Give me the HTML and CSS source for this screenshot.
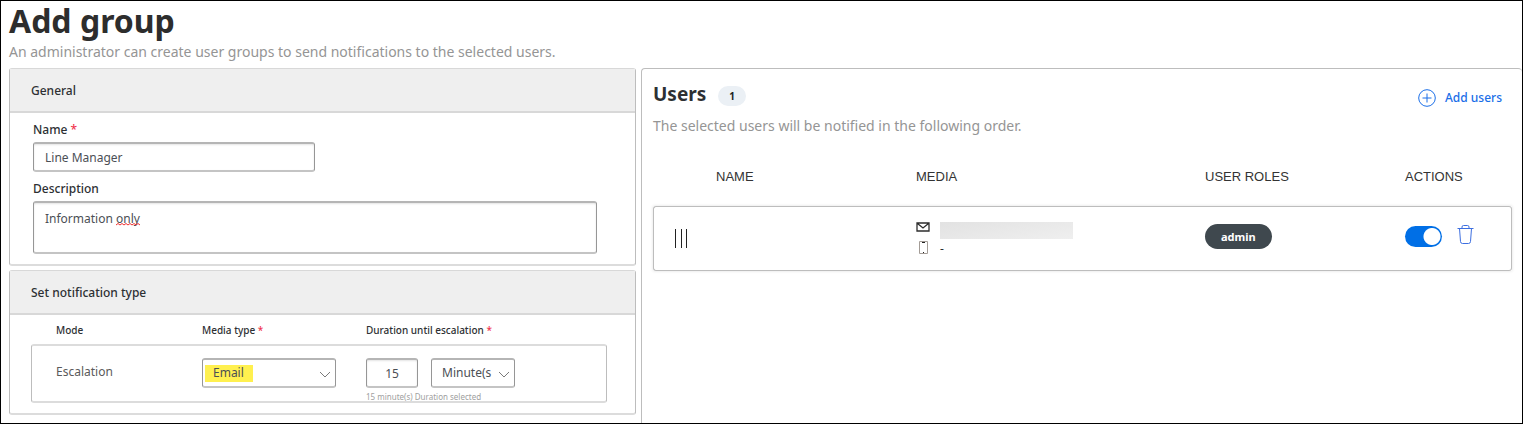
FILE: index.html
```html
<!DOCTYPE html>
<html lang="en">
<head>
<meta charset="utf-8">
<title>Add group</title>
<link rel="stylesheet" href="styles.css">
</head>
<body>
<div class="page">
  <header class="page-header">
    <h1 class="page-title">Add group</h1>
    <p class="lead">An administrator can create user groups to send notifications to the selected users.</p>
  </header>
  <main class="columns">
    <div class="settings">
      <section class="card">
        <h2 class="card-title">General</h2>
        <div class="general">
          <label class="label" for="name">Name <span class="required">*</span></label>
          <input class="control name-input" id="name" type="text" value="Line Manager">
          <label class="label" for="description">Description</label>
          <div class="description">
            <textarea class="control description-input" id="description" spellcheck="false">Information only</textarea>
            <svg class="squiggle" width="24" height="3" viewBox="0 0 24 3" fill="none" stroke="#f03030"><path d="M0 2l2-1.500 2 1.500 2-1.500 2 1.500 2-1.500 2 1.500 2-1.500 2 1.500 2-1.500 2 1.500 2-1.500 2 1.500"/></svg>
          </div>
        </div>
      </section>
      <section class="card">
        <h2 class="card-title">Set notification type</h2>
        <div class="notification">
          <div class="mode-grid mode-head">
            <span>Mode</span>
            <label for="media">Media type <span class="required">*</span></label>
            <label for="duration">Duration until escalation <span class="required">*</span></label>
          </div>
          <div class="mode-grid mode-row">
            <span class="mode-name">Escalation</span>
            <div class="select media-select">
              <select class="control marked" id="media"><option>Email</option></select>
              <svg class="chevron" width="12" height="7" viewBox="0 0 12 7" fill="none" stroke="#7a7a7a"><path d="M1 1l5 5 5-5"/></svg>
            </div>
            <div class="duration">
              <div class="duration-fields">
                <input class="control amount" id="duration" type="text" value="15">
                <div class="select unit-select">
                  <select class="control" aria-label="Duration unit"><option>Minute(s</option></select>
                  <svg class="chevron" width="12" height="7" viewBox="0 0 12 7" fill="none" stroke="#7a7a7a"><path d="M1 1l5 5 5-5"/></svg>
                </div>
              </div>
              <span class="hint">15 minute(s) Duration selected</span>
            </div>
          </div>
        </div>
      </section>
    </div>
    <section class="users">
      <div class="users-head">
        <h2 class="users-title">Users <span class="count">1</span></h2>
        <button class="add" type="button">
          <svg width="18" height="18" viewBox="0 0 18 18" fill="none" stroke="#1a6ee8"><circle cx="9" cy="9" r="8.300"/><path d="M9 4.500v9M4.500 9h9"/></svg>
          Add users
        </button>
      </div>
      <p class="lead">The selected users will be notified in the following order.</p>
      <table class="table">
        <thead>
          <tr><th class="col-drag"></th><th class="col-name">NAME</th><th class="col-media">MEDIA</th><th class="col-roles">USER ROLES</th><th>ACTIONS</th></tr>
        </thead>
        <tbody>
          <tr>
            <td><svg class="drag" width="14" height="19" viewBox="0 0 14 19" stroke="#222"><path d="M1.500 0v19M7.500 0v19M12.500 0v19"/></svg></td>
            <td></td>
            <td>
              <div class="media">
                <svg class="mail" width="14" height="10" viewBox="0 0 14 10" fill="none" stroke="#2d2d2d" stroke-width="1.300"><path d="M1 1h12v8H1zM1.500 1.500L7 6l5.500-4.500"/></svg>
                <span class="redacted"></span>
                <svg width="14" height="14" viewBox="0 0 14 14" fill="none" stroke="#a39c96"><path d="M3.500.5h8v12h-8z"/><path d="M6 1.500h3M7 11.500h1" stroke="#222"/></svg>
                <span>-</span>
              </div>
            </td>
            <td class="raised"><span class="role">admin</span></td>
            <td class="raised">
              <div class="actions">
                <input class="toggle" type="checkbox" role="switch" aria-label="Notify user" checked>
                <button class="delete" type="button" aria-label="Remove user">
                  <svg width="17" height="19" viewBox="0 0 17 19" fill="none" stroke="#3d6fe0"><path d="M.5 3.500h16M5 3.500V2Q5 .5 6.500.5h4Q12 .5 12 2v1.500M2.500 3.500l1 13q.1 2 2 2h6q1.900 0 2-2l1-13"/></svg>
                </button>
              </div>
            </td>
          </tr>
        </tbody>
      </table>
    </section>
  </main>
</div>
</body>
</html>
```
FILE: styles.css
```css
* { box-sizing: border-box; }
body {
  margin: 0;
  background: #fff;
  color: #2d3033;
  font: 12px/18px "Noto Sans", "Open Sans", sans-serif;
}
h1, h2, p { margin: 0; }
.page {
  display: flex;
  flex-direction: column;
  min-height: 100vh;
  padding-left: 8px;
  border: 1px solid #000;
}
.page-header { padding-bottom: 6px; }
.page-title { font-size: 32px; line-height: 40px; color: #2d2d2d; }
.lead { font-size: 14px; line-height: 21px; color: #959595; }
.columns {
  flex: 1;
  display: grid;
  grid-template-columns: 627fr 881fr;
  gap: 5px;
}
.settings { display: flex; flex-direction: column; gap: 4px; }
.card { border: 1px solid #bdbdbd; border-top-color: #d8d8d8; border-bottom: 2px solid #dcdcdc; border-radius: 3px; }
.card-title {
  padding: 13px 21px 11px;
  border-bottom: 2px solid #d8d8d8;
  background: #efefef;
  font-size: 12px;
  line-height: 18px;
  font-weight: 500;
}
.general {
  display: flex;
  flex-direction: column;
  padding: 8px 38px 10px 23px;
}
.label { font-weight: 500; line-height: 18px; }
.required { color: #f0364f; }
.control {
  width: 100%;
  margin: 0;
  border: 1px solid #969696;
  border-top: 2px solid #b5b5b5;
  border-bottom: 2px solid #c4c4c4;
  border-radius: 3px;
  background: #fff;
  color: #4b4f55;
  font: inherit;
  appearance: none;
  outline: none;
}
.name-input { width: 50%; height: 30px; margin: 3px 0 8px; padding: 0 11px; box-shadow: inset 0 1px 2px #e4e4e4; }
.description { position: relative; margin-top: 3px; }
.description-input { display: block; height: 53px; padding: 7px 11px; resize: none; box-shadow: inset 0 1px 2px #e4e4e4; }
.squiggle { position: absolute; left: 83px; top: 22px; }
.notification { padding: 6px 28px 10px 21px; }
.mode-grid { display: grid; grid-template-columns: 146px 164px 1fr; }
.mode-head { padding-left: 25px; font-size: 10px; font-weight: 500; }
.mode-row {
  height: 59px;
  margin-top: 5px;
  padding: 12px 0 0 24px;
  border: 1px solid #bdbdbd;
  border-top: 2px solid #dcdcdc;
  border-bottom: 2px solid #dcdcdc;
  border-radius: 3px;
}
.mode-name { padding-top: 5px; color: #5a5a5a; }
.select { position: relative; height: 30px; }
.select .control { height: 30px; padding: 0 10px; }
.media-select { width: 134px; }
.unit-select { width: 84px; }
.marked { background: linear-gradient(#fff04f, #fff04f) 2px 5px / 48px 17px no-repeat #fff; }
.chevron { position: absolute; right: 5px; top: 13px; pointer-events: none; }
.duration-fields { display: flex; gap: 13px; }
.amount { width: 52px; height: 30px; text-align: center; box-shadow: inset 0 1px 2px #e4e4e4; }
.hint { display: block; margin-top: 3px; font-size: 8px; line-height: 12px; color: #a0a0a0; }
.users {
  padding: 11px 10px 12px 11px;
  border: 1px solid #bdbdbd;
  border-width: 1px 0 0 1px;
  border-radius: 4px 4px 0 0;
}
.users-head { display: flex; justify-content: space-between; align-items: center; height: 35px; padding: 0 10px 7px 0; }
.users-title { display: flex; align-items: center; gap: 12px; font-size: 19px; line-height: 26px; }
.count { margin-top: 4px; padding: 0 11px; border-radius: 10px; background: #ebf0f5; font-size: 10px; line-height: 20px; color: #222; }
.add {
  display: flex;
  align-items: center;
  gap: 9px;
  margin-top: 7px;
  padding: 0;
  border: 0;
  background: none;
  color: #1a6ee8;
  font: inherit;
  font-weight: 500;
}
.table { width: 100%; margin-top: 31px; border-spacing: 0; table-layout: fixed; }
.table th { height: 39px; padding: 0 0 19px; text-align: left; font: 13px/20px "Liberation Sans", Arial, sans-serif; color: #333; }
.col-drag { width: 63px; }
.col-name { width: 200px; }
.col-media { width: 289px; }
.col-roles { width: 200px; }
.table td { height: 65px; padding: 0; border: 1px solid #bdbdbd; border-width: 1px 0; }
.table td:first-child { padding-left: 20px; border-left-width: 1px; border-radius: 3px 0 0 3px; }
.table td:last-child { border-right-width: 1px; border-radius: 0 3px 3px 0; }
.table .raised { padding-bottom: 4px; }
.table svg { display: block; }
.table tbody { box-shadow: 0 0 3px #e0e0e0; }
.media { display: grid; grid-template-columns: 14px 133px; gap: 2px 10px; align-items: center; line-height: 15px; }
.mail { align-self: start; }
.redacted { height: 17px; background: linear-gradient(170deg, #e2e2e2, #efefef); }
.role { display: inline-block; padding: 0 16px; border-radius: 13px; background: #3f484e; color: #fff; font-size: 11px; font-weight: 700; line-height: 25px; }
.actions { display: flex; align-items: center; gap: 15px; }
.toggle {
  width: 37px;
  height: 21px;
  margin: 0;
  border-radius: 11px;
  background: radial-gradient(circle at 27px 50%, #fff 8px, #006fe6 9px);
  appearance: none;
}
.delete { padding: 0 0 4px; border: 0; background: none; }
```
